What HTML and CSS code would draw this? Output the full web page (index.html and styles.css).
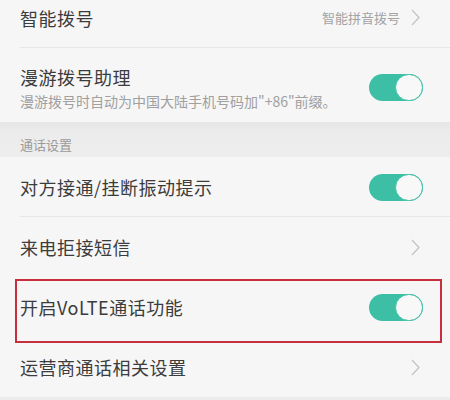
FILE: index.html
```
<!DOCTYPE html>
<html lang="zh-CN">
<head>
    <meta charset="UTF-8">
    <title>通话设置</title>
    <link rel="stylesheet" href="styles.css">
</head>
<body>
<div class="page">
    <div class="row row-top line">
        <div class="title">智能拨号</div>
        <div class="extra">
            <span class="value">智能拼音拨号</span>
            <svg class="arrow" width="9" height="17" viewBox="0 0 9 17"><polyline points="1,1 8,8.5 1,16" fill="none" stroke="#c4c4c4" stroke-width="1.3"/></svg>
        </div>
    </div>
    <div class="row row-sub">
        <div class="text">
            <div class="title">漫游拨号助理</div>
            <div class="desc">漫游拨号时自动为中国大陆手机号码加"+86"前缀。</div>
        </div>
        <div class="switch on"><div class="knob"></div></div>
    </div>

    <div class="group">通话设置</div>

    <div class="row line">
        <div class="title">对方接通/挂断振动提示</div>
        <div class="switch on"><div class="knob"></div></div>
    </div>
    <div class="row">
        <div class="title">来电拒接短信</div>
        <svg class="arrow" width="9" height="17" viewBox="0 0 9 17"><polyline points="1,1 8,8.5 1,16" fill="none" stroke="#c4c4c4" stroke-width="1.3"/></svg>
    </div>
    <div class="row">
        <div class="title">开启VoLTE通话功能</div>
        <div class="switch on"><div class="knob"></div></div>
    </div>
    <div class="row">
        <div class="title">运营商通话相关设置</div>
        <svg class="arrow" width="9" height="17" viewBox="0 0 9 17"><polyline points="1,1 8,8.5 1,16" fill="none" stroke="#c4c4c4" stroke-width="1.3"/></svg>
    </div>
    <div class="bottom"></div>

    <!-- 红框标注 -->
    <div class="mark"></div>
</div>
</body>
</html>
```

FILE: styles.css
```
body{
    margin: 0;
    background: #f6f6f6;
    font-family: "Noto Sans CJK SC", "Noto Sans", sans-serif;
}
.page{
    position: relative;
    width: 450px;
    height: 400px;
    overflow: hidden;
    background: #f6f6f6;
}
.row{
    height: 60px;
    padding: 0 27px 0 20px;
    display: flex;
    flex-direction: row;
    align-items: center;
    justify-content: space-between;
    box-sizing: border-box;
}
.row-top{
    height: 48px;
    padding-top: 0;
    padding-bottom: 13px;
}
.line{
    position: relative;
}
.line::after{
    content: "";
    position: absolute;
    left: 20px;
    right: 0;
    bottom: 0;
    height: 1px;
    background: #e6e6e6;
}
.row-sub{
    height: 74px;
    padding-top: 4px;
}
.title{
    font-size: 18px;
    color: #3c3c3c;
    line-height: 24px;
    letter-spacing: 0.5px;
}
.desc{
    font-size: 14px;
    color: #a0a0a0;
    line-height: 18px;
    margin-top: 3px;
}
.extra{
    display: flex;
    align-items: center;
}
.value{
    font-size: 13px;
    color: #a3a3a3;
    margin-right: 11px;
}
.arrow{
    margin-right: 3px;
}
.switch{
    width: 54px;
    height: 27px;
    border-radius: 14px;
    background: #3cbfa5;
    display: flex;
    justify-content: flex-end;
}
.knob{
    width: 28px;
    height: 27px;
    border-radius: 14px;
    background: #f8f8f8;
    border: 1.5px solid #3cbfa5;
    box-sizing: border-box;
}
.group{
    height: 35px;
    background: linear-gradient(#e6e6e6, #ececec 30%, #ededed);
    font-size: 13px;
    color: #9a9a9a;
    padding: 14px 0 0 20px;
    box-sizing: border-box;
    line-height: 18px;
}
.bottom{
    height: 3px;
    background: #ececec;
}
.mark{
    position: absolute;
    left: 15px;
    top: 279px;
    width: 427px;
    height: 64px;
    border: 2px solid #c5303c;
    box-sizing: border-box;
}
```
